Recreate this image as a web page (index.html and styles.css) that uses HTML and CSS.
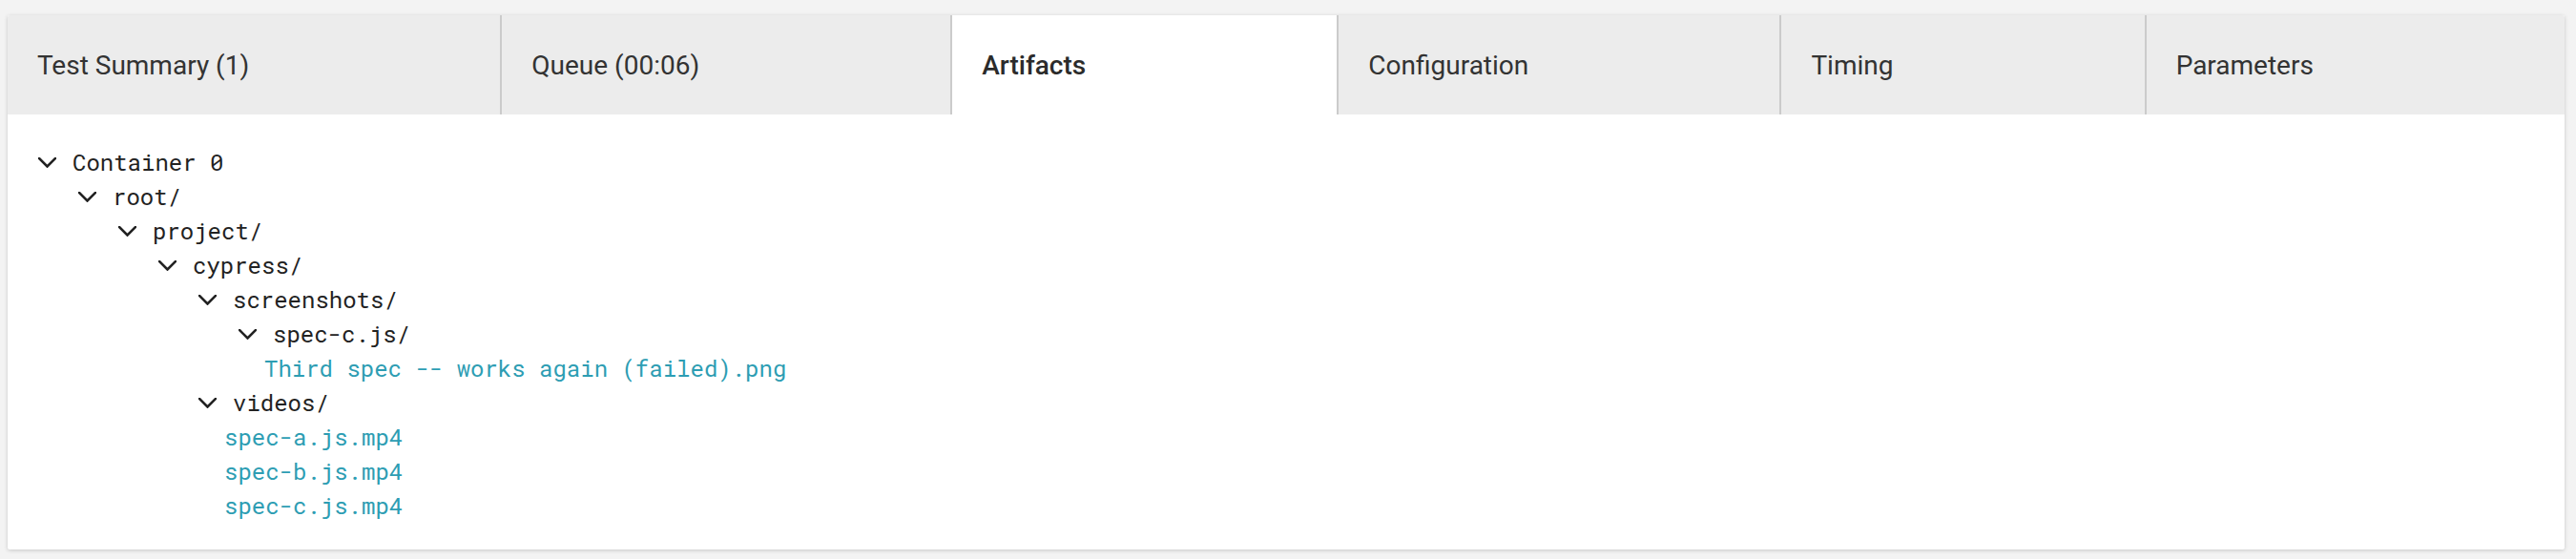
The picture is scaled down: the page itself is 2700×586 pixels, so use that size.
FILE: index.html
```html
<!DOCTYPE html>
<html lang="en">
<head>
<meta charset="utf-8">
<title>Artifacts</title>
<link rel="stylesheet" href="styles.css">
</head>
<body>
<div class="page">
  <div class="card">
    <nav class="tabs">
      <div class="tab">Test Summary (1)</div>
      <div class="tab">Queue (00:06)</div>
      <div class="tab active">Artifacts</div>
      <div class="tab">Configuration</div>
      <div class="tab">Timing</div>
      <div class="tab">Parameters</div>
    </nav>
    <ul class="tree">
      <li class="row d0"><svg class="chev" viewBox="0 0 19 11"><path d="M1 1 L9.5 9.5 L18 1"/></svg><span class="dir">Container 0</span></li>
      <li class="row d1"><svg class="chev" viewBox="0 0 19 11"><path d="M1 1 L9.5 9.5 L18 1"/></svg><span class="dir">root/</span></li>
      <li class="row d2"><svg class="chev" viewBox="0 0 19 11"><path d="M1 1 L9.5 9.5 L18 1"/></svg><span class="dir">project/</span></li>
      <li class="row d3"><svg class="chev" viewBox="0 0 19 11"><path d="M1 1 L9.5 9.5 L18 1"/></svg><span class="dir">cypress/</span></li>
      <li class="row d4"><svg class="chev" viewBox="0 0 19 11"><path d="M1 1 L9.5 9.5 L18 1"/></svg><span class="dir">screenshots/</span></li>
      <li class="row d5"><svg class="chev" viewBox="0 0 19 11"><path d="M1 1 L9.5 9.5 L18 1"/></svg><span class="dir">spec-c.js/</span></li>
      <li class="row leaf l6"><a class="file" href="#">Third spec -- works again (failed).png</a></li>
      <li class="row d4"><svg class="chev" viewBox="0 0 19 11"><path d="M1 1 L9.5 9.5 L18 1"/></svg><span class="dir">videos/</span></li>
      <li class="row leaf l5"><a class="file" href="#">spec-a.js.mp4</a></li>
      <li class="row leaf l5"><a class="file" href="#">spec-b.js.mp4</a></li>
      <li class="row leaf l5"><a class="file" href="#">spec-c.js.mp4</a></li>
    </ul>
  </div>
</div>
</body>
</html>
```

FILE: styles.css
```css
* { box-sizing: border-box; }
html, body {
  margin: 0;
  padding: 0;
  background: #f3f3f3;
}
.page {
  padding: 16px 12px 10px 8px;
  height: 586px;
}
.card {
  background: #ffffff;
  border-radius: 2px;
  box-shadow: 0 1px 4px rgba(0, 0, 0, 0.18);
  height: 560px;
  overflow: hidden;
}
.tabs {
  display: flex;
  height: 104px;
  background: #ececec;
}
.tab {
  flex: 1 1 auto;
  display: flex;
  align-items: center;
  padding: 0 31px;
  font-family: Roboto, "Liberation Sans", sans-serif;
  font-size: 28px;
  color: #333333;
  white-space: nowrap;
  border-left: 2px solid #cbcbcb;
}
.tab:first-child { border-left: none; }
.tab.active {
  background: #ffffff;
  font-weight: 500;
  color: #2b2b2b;
}
.tree {
  list-style: none;
  margin: 0;
  padding: 32px 0 28px 0;
  font-family: "Roboto Mono", "DejaVu Sans Mono", monospace;
  font-size: 24px;
}
.row {
  height: 36px;
  display: flex;
  align-items: center;
  white-space: nowrap;
}
.chev {
  width: 19px;
  height: 11px;
  margin-right: 17px;
  flex: none;
}
.chev path {
  fill: none;
  stroke: #222222;
  stroke-width: 2.6;
  stroke-linecap: square;
}
.dir { color: #222222; }
.file {
  color: #2d9db3;
  text-decoration: none;
}
.d0 { padding-left: 32px; }
.d1 { padding-left: 74px; }
.d2 { padding-left: 116px; }
.d3 { padding-left: 158px; }
.d4 { padding-left: 200px; }
.d5 { padding-left: 242px; }
.l5 { padding-left: 227px; }
.l6 { padding-left: 269px; }
```
